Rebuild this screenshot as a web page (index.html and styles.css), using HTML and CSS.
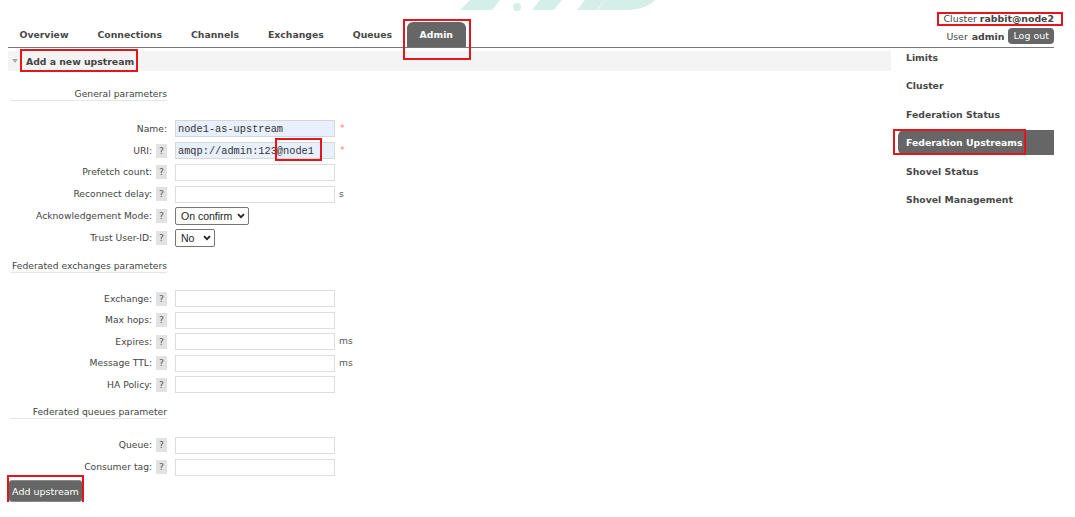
FILE: index.html
```html
<!DOCTYPE html>
<html>
<head>
<meta charset="utf-8">
<title>RabbitMQ Management - Federation Upstreams</title>
<link rel="stylesheet" href="styles.css">
</head>
<body>
<svg class="watermark" width="240" height="12" viewBox="0 0 240 12">
  <polygon points="30,0 60,0 52,10 20,10" />
  <circle cx="77" cy="7" r="4" />
  <polygon points="100,0 122,0 114,10 92,10" />
  <polygon points="145,0 165,0 157,10 137,10" />
  <path d="M165,0 L215,0 Q205,11 180,10 L158,10 Z" />
</svg>
<div class="page">
  <header class="top">
    <nav class="tabs">
      <a class="tab">Overview</a>
      <a class="tab">Connections</a>
      <a class="tab">Channels</a>
      <a class="tab">Exchanges</a>
      <a class="tab">Queues</a>
      <a class="tab active">Admin</a>
    </nav>
    <div class="login">
      <div class="cluster">Cluster <b>rabbit@node2</b></div>
      <div class="user">User <b>admin</b> <span class="logout">Log out</span></div>
    </div>
  </header>
  <div class="content">
    <main class="main">
      <div class="section-head"><span class="tri"></span>Add a new upstream</div>
      <div class="group g1">
        <div class="legend">General parameters</div>
        <div class="row"><div class="lbl">Name:</div><input class="in auto" value="node1-as-upstream"><span class="req">*</span></div>
        <div class="row"><div class="lbl">URI: <span class="help">?</span></div><input class="in auto" value="amqp://admin:123@node1"><span class="req">*</span></div>
        <div class="row"><div class="lbl">Prefetch count: <span class="help">?</span></div><input class="in"></div>
        <div class="row"><div class="lbl">Reconnect delay: <span class="help">?</span></div><input class="in"><span class="unit">s</span></div>
        <div class="row"><div class="lbl">Acknowledgement Mode: <span class="help">?</span></div>
          <span class="selwrap"><select class="sel wide"><option>On confirm</option></select><svg class="chev" width="8" height="6" viewBox="0 0 8 6"><path d="M1 1.2 L4 4.2 L7 1.2" /></svg></span></div>
        <div class="row"><div class="lbl">Trust User-ID: <span class="help">?</span></div>
          <span class="selwrap"><select class="sel narrow"><option>No</option></select><svg class="chev" width="8" height="6" viewBox="0 0 8 6"><path d="M1 1.2 L4 4.2 L7 1.2" /></svg></span></div>
      </div>
      <div class="group g2">
        <div class="legend">Federated exchanges parameters</div>
        <div class="row"><div class="lbl">Exchange: <span class="help">?</span></div><input class="in"></div>
        <div class="row"><div class="lbl">Max hops: <span class="help">?</span></div><input class="in"></div>
        <div class="row"><div class="lbl">Expires: <span class="help">?</span></div><input class="in"><span class="unit">ms</span></div>
        <div class="row"><div class="lbl">Message TTL: <span class="help">?</span></div><input class="in"><span class="unit">ms</span></div>
        <div class="row"><div class="lbl">HA Policy: <span class="help">?</span></div><input class="in"></div>
      </div>
      <div class="group g3">
        <div class="legend">Federated queues parameter</div>
        <div class="row"><div class="lbl">Queue: <span class="help">?</span></div><input class="in"></div>
        <div class="row"><div class="lbl">Consumer tag: <span class="help">?</span></div><input class="in"></div>
      </div>
      <button class="submit">Add upstream</button>
    </main>
    <aside class="side">
      <ul class="menu">
        <li><a>Limits</a></li>
        <li><a>Cluster</a></li>
        <li><a>Federation Status</a></li>
        <li><a class="sel-item">Federation Upstreams</a></li>
        <li><a>Shovel Status</a></li>
        <li><a>Shovel Management</a></li>
      </ul>
    </aside>
  </div>
</div>
<div class="mark m-admin"></div>
<div class="mark m-cluster"></div>
<div class="mark m-head"></div>
<div class="mark m-uri"></div>
<div class="mark m-side"></div>
<div class="mark m-btn"></div>
</body>
</html>
```

FILE: styles.css
```css
html, body {
  margin: 0;
  background: #fff;
}
body {
  position: relative;
  font-family: "DejaVu Sans", Verdana, sans-serif;
  font-size: 9.2px;
  color: #444;
}
.watermark {
  position: absolute;
  left: 440px;
  top: 0;
  fill: #d4efe8;
}
.page {
  width: 1046px;
  margin-left: 8px;
}
.top {
  display: flex;
  justify-content: space-between;
  align-items: flex-end;
  height: 48px;
  box-sizing: border-box;
  border-bottom: 1px solid #777;
}
.tabs {
  display: flex;
  margin-left: -3px;
}
.tab {
  display: block;
  padding: 0 14.5px;
  height: 25px;
  line-height: 26px;
  font-weight: bold;
  font-size: 9.3px;
  color: #484848;
}
.tab.active {
  background: #666;
  color: #fff;
  border-radius: 6px 6px 0 0;
  padding: 0 13px;
}
.login {
  text-align: right;
  margin-bottom: 3px;
}
.cluster {
  line-height: 12px;
  margin-bottom: 3px;
  font-size: 9.4px;
}
.user {
  display: flex;
  align-items: center;
  justify-content: flex-end;
  gap: 4px;
  font-size: 9.4px;
}
.logout {
  display: inline-block;
  background: #666;
  color: #fff;
  height: 16px;
  line-height: 16px;
  padding: 0 5px;
  border-radius: 4px;
  font-size: 9.5px;
}
.content {
  display: flex;
  align-items: flex-start;
}
.main {
  width: 883px;
}
.section-head {
  margin-top: 3px;
  height: 20px;
  background: #f4f4f4;
  display: flex;
  align-items: center;
  padding-left: 4px;
  font-weight: bold;
  font-size: 9.3px;
  color: #444;
}
.tri {
  width: 0;
  height: 0;
  border-left: 3.5px solid transparent;
  border-right: 3.5px solid transparent;
  border-top: 4px solid #aaa;
  margin-right: 8px;
}
.legend {
  width: 157px;
  margin-left: 2px;
  text-align: right;
  line-height: 12px;
  border-bottom: 1px solid #e6e6e6;
  color: #444;
}
.g1 .legend { margin-top: 17px; margin-bottom: 17px; }
.g2 .legend { margin-top: 11px; margin-bottom: 15px; }
.g3 .legend { margin-top: 11px; margin-bottom: 15px; }
.row {
  display: flex;
  align-items: center;
  height: 21.8px;
}
.g2 .row { height: 21.5px; }
.g3 .row { height: 22px; }
.lbl {
  width: 159px;
  text-align: right;
  white-space: nowrap;
  margin-right: 8px;
}
.help {
  display: inline-block;
  width: 11px;
  height: 14px;
  line-height: 14px;
  text-align: center;
  background: #e2e2e2;
  color: #555;
  margin-left: 1px;
  vertical-align: middle;
}
.in {
  width: 160px;
  height: 17px;
  box-sizing: border-box;
  border: 1px solid #ddd;
  padding: 0 2px;
  font-family: "Liberation Mono", "Courier New", monospace;
  font-size: 10.3px;
  color: #333;
  background: #fff;
  outline: none;
}
.in.auto {
  background: #e8f0fe;
  border-color: #d6d6d6;
}
.req {
  color: #f77;
  align-self: flex-start;
  margin-top: 4px;
  margin-left: 5px;
}
.unit {
  margin-left: 4px;
  color: #555;
  margin-top: -2px;
}
.selwrap {
  position: relative;
  display: inline-block;
  height: 18px;
}
.sel {
  -webkit-appearance: none;
  appearance: none;
  height: 18px;
  box-sizing: border-box;
  font-family: "Liberation Sans", Arial, sans-serif;
  font-size: 10.5px;
  color: #222;
  border: 1px solid #767676;
  border-radius: 2px;
  background: #fff;
  padding: 0 0 0 5px;
  outline: none;
}
.sel.wide { width: 74px; }
.sel.narrow { width: 40px; }
.chev {
  position: absolute;
  right: 4px;
  top: 6px;
  fill: none;
  stroke: #222;
  stroke-width: 1.8;
}
.submit {
  display: block;
  margin-top: 2px;
  width: 75px;
  height: 22px;
  border: 1px solid #8a8a8a;
  background: #666;
  color: #fff;
  font-family: "DejaVu Sans", Verdana, sans-serif;
  font-size: 9.5px;
  border-radius: 4px;
  padding: 0;
}
.side {
  width: 156px;
  margin-left: 7px;
}
.menu {
  list-style: none;
  margin: -3.5px 0 0 0;
  padding: 0;
}
.menu li {
  margin-bottom: 3.5px;
}
.menu a {
  display: block;
  height: 25px;
  line-height: 25px;
  padding-left: 8px;
  font-weight: bold;
  font-size: 9.3px;
  color: #484848;
}
.menu a.sel-item {
  background: #666;
  color: #fff;
  border-radius: 6px 0 0 6px;
}
.mark {
  position: absolute;
  border: 2px solid #e4161b;
  box-sizing: border-box;
}
.m-admin { left: 403px; top: 19px; width: 68px; height: 41px; }
.m-cluster { left: 937px; top: 12px; width: 126px; height: 14px; }
.m-head { left: 20px; top: 49px; width: 118px; height: 23px; }
.m-uri { left: 275px; top: 138px; width: 47px; height: 23px; }
.m-side { left: 893px; top: 129px; width: 133px; height: 26px; }
.m-btn { left: 7px; top: 475px; width: 77px; height: 29px; }
```
